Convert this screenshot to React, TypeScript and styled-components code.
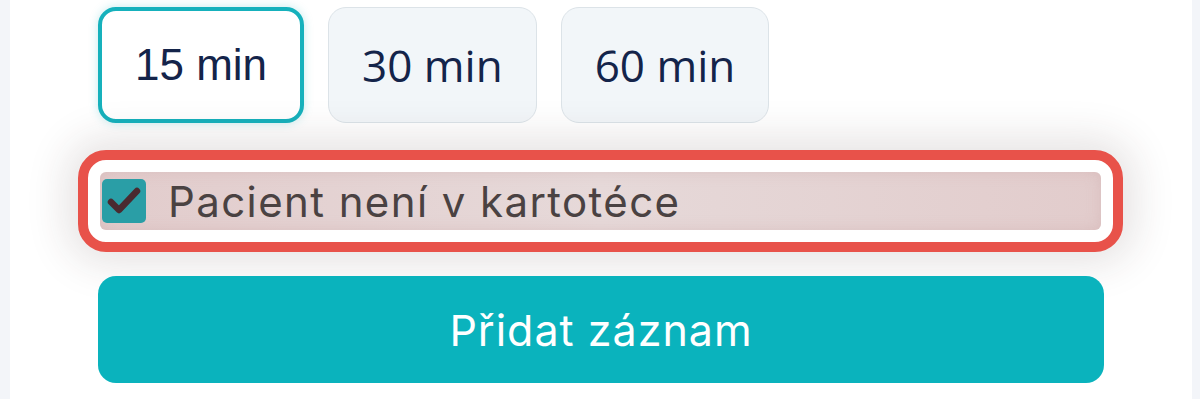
import React, { useState } from "react";
import styled, { createGlobalStyle } from "styled-components";

const GlobalStyle = createGlobalStyle`
  html, body {
    margin: 0;
    padding: 0;
    background: #f3f5f9;
    overflow: hidden;
  }
`;

const Panel = styled.div`
  margin: 0 8px 0 10px;
  height: 399px;
  box-sizing: border-box;
  background: #ffffff;
  padding: 7px 88px 0 88px;
  display: flex;
  flex-direction: column;
`;

const DurationRow = styled.div`
  display: flex;
  gap: 24px;
`;

const DurationButton = styled.button<{ $active: boolean }>`
  height: 116px;
  box-sizing: border-box;
  padding: 0 33px;
  border-radius: 18px;
  font-size: 44px;
  color: #14244a;
  cursor: pointer;
  font-family: ${p => (p.$active ? '"Liberation Sans", Arial' : '"Open Sans"')}, sans-serif;
  background: ${p => (p.$active ? "#ffffff" : "#f2f6f9")};
  border: ${p => (p.$active ? "4px solid #16b1bc" : "1.5px solid #dce3e8")};
  box-shadow: ${p => (p.$active ? "0 0 10px rgba(22, 177, 188, 0.25)" : "none")};
`;

const Highlight = styled.div`
  margin: 27px -19px 0 -20px;
  border: 10px solid #e8524a;
  border-radius: 28px;
  padding: 12px;
  background: #ffffff;
  box-shadow: 0 0 40px 12px rgba(60, 40, 40, 0.13);
`;

const CheckRow = styled.label`
  height: 58px;
  display: flex;
  align-items: center;
  gap: 22px;
  padding-left: 2px;
  border-radius: 6px;
  background: linear-gradient(90deg, #e2cccc 0%, #e6d9d9 50%, #e2cccc 100%);
  box-shadow: inset 0 0 14px rgba(200, 160, 160, 0.35);
  cursor: pointer;
`;

const Box = styled.span`
  width: 44px;
  height: 44px;
  flex: none;
  border-radius: 5px;
  background: #2a9ea6;
  display: flex;
  align-items: center;
  justify-content: center;
`;

const CheckLabel = styled.span`
  font-family: Inter, "Noto Sans", sans-serif;
  font-size: 42px;
  color: #4a4242;
  letter-spacing: 1.4px;
`;

const SubmitButton = styled.button`
  margin-top: 24px;
  height: 107px;
  border: none;
  border-radius: 18px;
  background: #0ab3bd;
  color: #ffffff;
  font-family: Inter, "Noto Sans", sans-serif;
  font-size: 43px;
  letter-spacing: 1px;
  cursor: pointer;
`;

const durations = ["15 min", "30 min", "60 min"];

export default function App() {
  const [selected, setSelected] = useState("15 min");
  const [notInRecords, setNotInRecords] = useState(true);

  return (
    <>
      <GlobalStyle />
      <Panel>
        <DurationRow>
          {durations.map(d => (
            <DurationButton key={d} $active={d === selected} onClick={() => setSelected(d)}>
              {d}
            </DurationButton>
          ))}
        </DurationRow>
        <Highlight>
          <CheckRow onClick={() => setNotInRecords(v => !v)}>
            <Box>
              {notInRecords && (
                <svg width="34" height="30" viewBox="0 0 34 30">
                  <path
                    d="M4 16 L12 24 L30 5"
                    fill="none"
                    stroke="#4a2a30"
                    strokeWidth="6.5"
                    strokeLinecap="round"
                    strokeLinejoin="round"
                  />
                </svg>
              )}
            </Box>
            <CheckLabel>Pacient není v kartotéce</CheckLabel>
          </CheckRow>
        </Highlight>
        <SubmitButton>Přidat záznam</SubmitButton>
      </Panel>
    </>
  );
}
